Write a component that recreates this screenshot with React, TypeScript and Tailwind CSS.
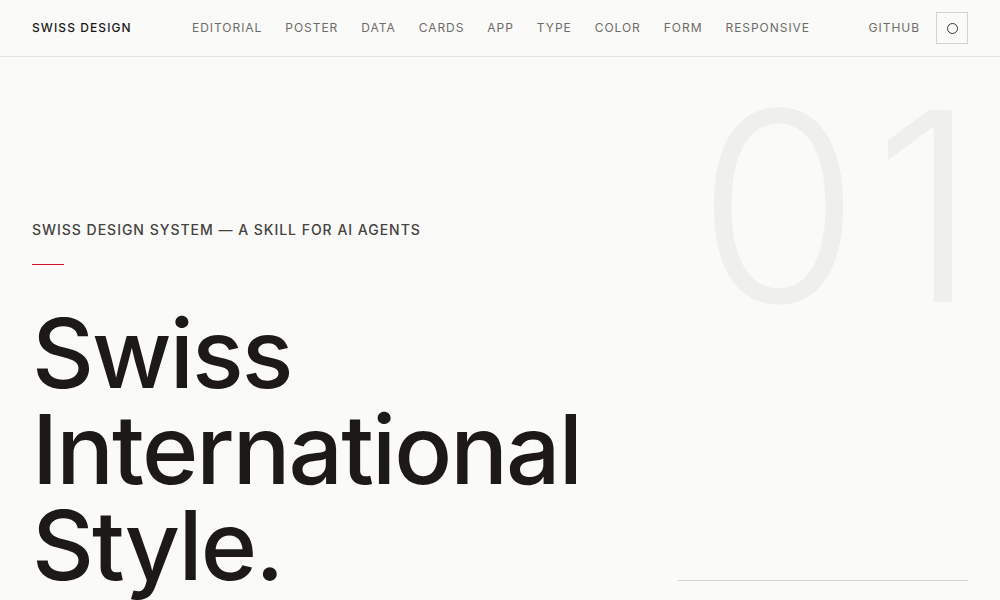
const nav = ["Editorial", "Poster", "Data", "Cards", "App", "Type", "Color", "Form", "Responsive"];

function Header() {
  return (
    <header className="flex h-[57px] items-center border-b border-[#e4e4e2] px-8">
      <div className="w-[160px] text-[12px] font-medium uppercase tracking-[0.09em] text-[#1b1917]">Swiss Design</div>
      <nav className="flex items-center gap-[23px]">
        {nav.map((item) => (
          <a key={item} href="#" className="text-[12px] uppercase tracking-[0.08em] text-[#6e6c69]">
            {item}
          </a>
        ))}
      </nav>
      <div className="ml-auto flex items-center gap-4">
        <a href="#" className="text-[12px] uppercase tracking-[0.08em] text-[#6e6c69]">GitHub</a>
        <button className="flex h-8 w-8 items-center justify-center border border-[#d4d3d0]">
          <span className="h-[11px] w-[11px] rounded-full border-[1.5px] border-[#3a3835]" />
        </button>
      </div>
    </header>
  );
}

export default function App() {
  return (
    <div className="h-[600px] overflow-hidden bg-[#fafaf9] font-['Inter','Noto_Sans',sans-serif]">
      <Header />
      <section className="relative h-[543px] px-8">
        {/* section number, oversized and washed out behind the hero */}
        <div className="pointer-events-none absolute left-[697px] top-[17px] select-none whitespace-nowrap text-[264px] font-light leading-none tracking-[0.05em] text-[#efefed]">
          01
        </div>
        <div className="relative pt-[162px]">
          <p className="text-[14px] font-medium uppercase tracking-[0.07em] text-[#45433f]">
            Swiss Design System — A Skill for AI Agents
          </p>
          <div className="mt-[24px] h-px w-8 bg-[#d0102a]" />
          <h1 className="mt-[40px] text-[96px] font-medium leading-[96px] tracking-[-0.02em] text-[#1c1917]">
            Swiss
            <br />
            International
            <br />
            Style.
          </h1>
        </div>
        <div className="absolute bottom-[19px] right-8 h-px w-[290px] bg-[#d6d4d1]" />
      </section>
    </div>
  );
}
